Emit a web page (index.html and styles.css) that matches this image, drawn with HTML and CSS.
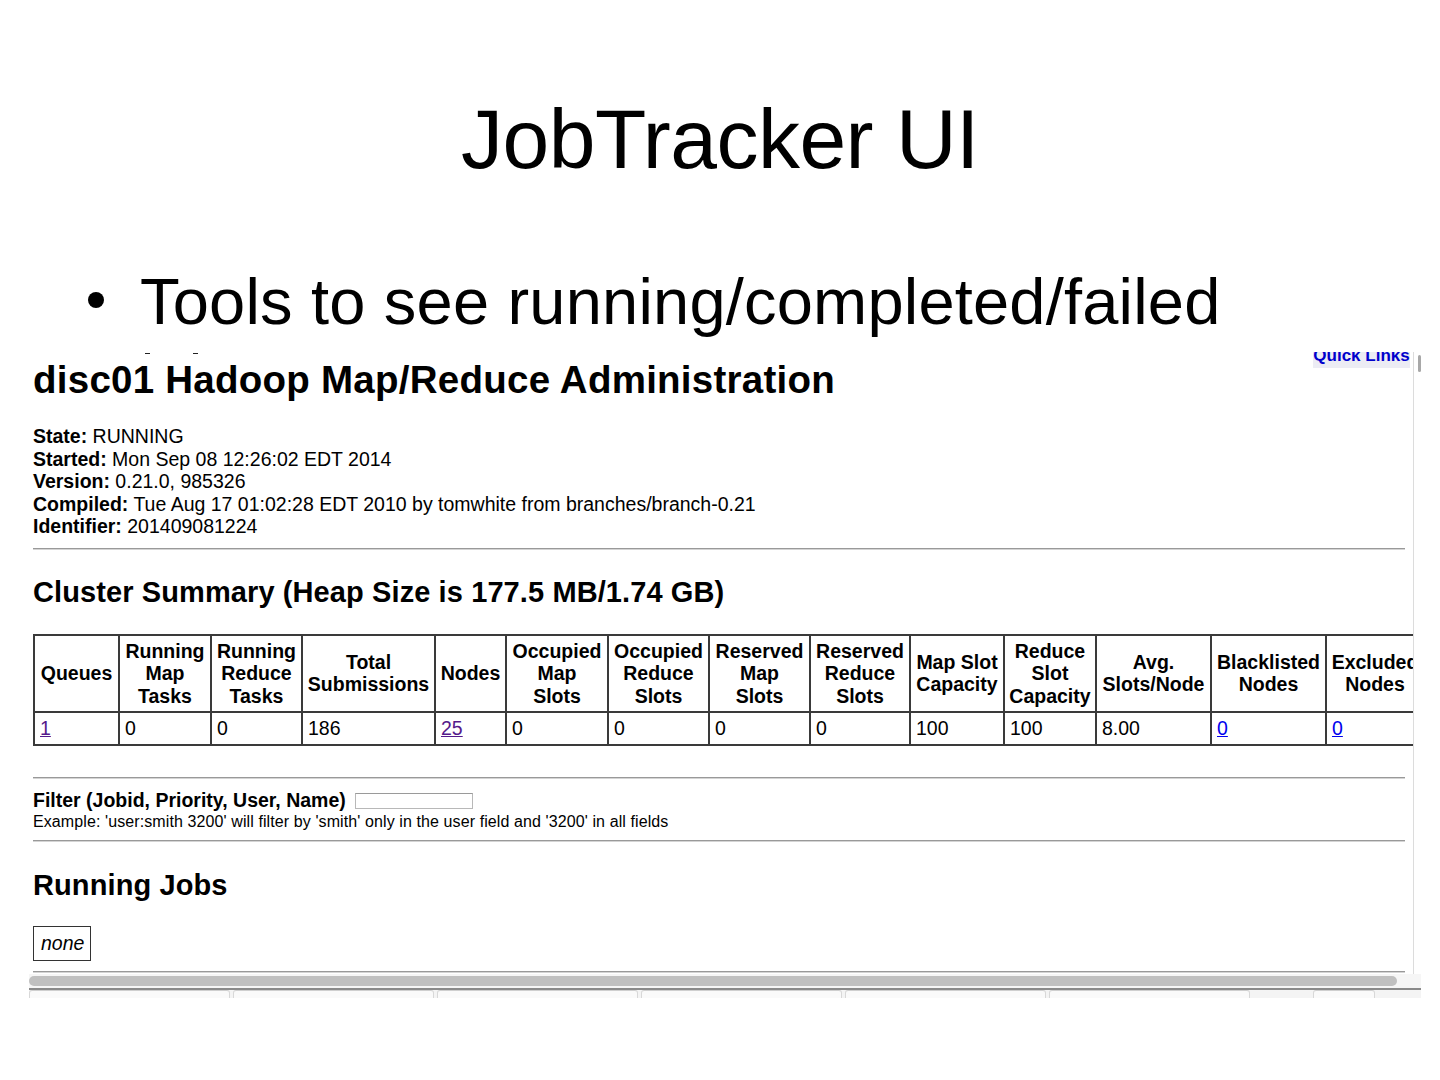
FILE: index.html
```html
<!DOCTYPE html>
<html>
<head>
<meta charset="utf-8">
<title>JobTracker UI</title>
<link rel="stylesheet" href="styles.css">
</head>
<body>
<div class="slide">
  <h1 class="slide-title">JobTracker UI</h1>
  <ul class="bullets">
    <li><span class="dot"></span><span class="btext">Tools to see running/completed/failed</span></li>
  </ul>
  <div class="shot">
    <div class="pane">
      <div class="content">
        <div class="quicklinks">Quick Links</div>
        <span class="clipmark m1"></span><span class="clipmark m2"></span>
        <h1 class="page-title">disc01 Hadoop Map/Reduce Administration</h1>
        <div class="info">
          <div><b>State:</b> RUNNING</div>
          <div><b>Started:</b> Mon Sep 08 12:26:02 EDT 2014</div>
          <div><b>Version:</b> 0.21.0, 985326</div>
          <div><b>Compiled:</b> Tue Aug 17 01:02:28 EDT 2010 by tomwhite from branches/branch-0.21</div>
          <div><b>Identifier:</b> 201409081224</div>
        </div>
        <div class="rule r1"></div>
        <h2 class="sec s1">Cluster Summary (Heap Size is 177.5 MB/1.74 GB)</h2>
        <table class="summary">
          <colgroup>
            <col class="c85"><col class="c92"><col class="c91"><col class="c133"><col class="c71"><col class="c102"><col class="c101"><col class="c101"><col class="c100"><col class="c94"><col class="c92"><col class="c115"><col class="c115"><col class="c98">
          </colgroup>
          <tr>
            <th>Queues</th>
            <th>Running<br>Map<br>Tasks</th>
            <th>Running<br>Reduce<br>Tasks</th>
            <th>Total<br>Submissions</th>
            <th>Nodes</th>
            <th>Occupied<br>Map<br>Slots</th>
            <th>Occupied<br>Reduce<br>Slots</th>
            <th>Reserved<br>Map<br>Slots</th>
            <th>Reserved<br>Reduce<br>Slots</th>
            <th>Map Slot<br>Capacity</th>
            <th>Reduce<br>Slot<br>Capacity</th>
            <th>Avg.<br>Slots/Node</th>
            <th>Blacklisted<br>Nodes</th>
            <th>Excluded<br>Nodes</th>
          </tr>
          <tr>
            <td><a class="visited" href="#">1</a></td>
            <td>0</td>
            <td>0</td>
            <td>186</td>
            <td><a class="visited" href="#">25</a></td>
            <td>0</td>
            <td>0</td>
            <td>0</td>
            <td>0</td>
            <td>100</td>
            <td>100</td>
            <td>8.00</td>
            <td><a class="link" href="#">0</a></td>
            <td><a class="link" href="#">0</a></td>
          </tr>
        </table>
        <div class="rule r2"></div>
        <div class="filter">
          <div class="filter-line"><b>Filter (Jobid, Priority, User, Name)</b><span class="field"></span></div>
          <div class="example">Example: 'user:smith 3200' will filter by 'smith' only in the user field and '3200' in all fields</div>
        </div>
        <div class="rule r3"></div>
        <h2 class="sec s2">Running Jobs</h2>
        <div class="nonebox"><i>none</i></div>
        <div class="rule r4"></div>
      </div>
      <div class="vbar"><div class="vthumb"></div></div>
    </div>
    <div class="hbar"><div class="hthumb"></div></div>
    <div class="tabs">
      <div class="tab"></div><div class="tab"></div><div class="tab"></div><div class="tab"></div><div class="tab"></div><div class="tab"></div><div class="tab small"></div>
    </div>
  </div>
</div>
</body>
</html>
```

FILE: styles.css
```css
html, body {
  margin: 0;
  padding: 0;
  background: #ffffff;
}
.slide {
  width: 1440px;
  height: 1080px;
  overflow: hidden;
  font-family: "Liberation Sans", Arial, sans-serif;
  color: #000;
}
.slide-title {
  margin: 0;
  padding-top: 89px;
  height: 100px;
  line-height: 100px;
  font-size: 84px;
  font-weight: normal;
  letter-spacing: -0.5px;
  text-align: center;
}
.bullets {
  list-style: none;
  margin: 73px 0 0 0;
  padding: 0 0 0 88px;
  height: 80px;
}
.bullets li {
  display: flex;
  align-items: center;
  height: 80px;
}
.dot {
  width: 16px;
  height: 16px;
  border-radius: 50%;
  background: #000;
  margin-right: 36px;
  margin-top: -4px;
  flex: none;
}
.btext {
  font-size: 65px;
  line-height: 80px;
  letter-spacing: 0.2px;
  white-space: nowrap;
}

/* embedded screenshot */
.shot {
  margin: 10px 0 0 29px;
  width: 1392px;
  height: 646px;
  display: flex;
  flex-direction: column;
  overflow: hidden;
}
.pane {
  display: flex;
  height: 622px;
}
.content {
  position: relative;
  width: 1380px;
  padding-left: 4px;
  overflow: hidden;
  font-size: 19.5px;
  line-height: 22.5px;
}
.quicklinks {
  position: absolute;
  top: -7px;
  right: 3px;
  width: 97px;
  height: 23px;
  background: #ececf4;
  color: #0000cc;
  font-weight: bold;
  font-size: 17px;
  line-height: 22px;
  text-align: center;
}
.clipmark {
  position: absolute;
  top: 1px;
  width: 5px;
  height: 1px;
  background: #222;
}
.m1 { left: 116px; }
.m2 { left: 164px; }
.page-title {
  margin: 7px 0 0 0;
  font-size: 38.5px;
  line-height: 42px;
  font-weight: bold;
  letter-spacing: 0.25px;
  white-space: nowrap;
}
.info {
  margin-top: 24px;
}
.rule {
  width: 1372px;
  height: 0;
  border-top: 1px solid #999;
  border-bottom: 1px solid #d4d4d4;
}
.r1 { margin-top: 10px; }
.r2 { margin-top: 31px; }
.r3 { margin-top: 9px; }
.r4 { margin-top: 10px; }
.sec {
  margin: 0;
  font-size: 29px;
  line-height: 32px;
  font-weight: bold;
  letter-spacing: 0.1px;
  white-space: nowrap;
}
.s1 { margin-top: 26px; }
.s2 { margin-top: 27px; }
.summary {
  margin-top: 26px;
  border-collapse: collapse;
  table-layout: fixed;
  width: 1390px;
}
.c85 { width: 85px; }
.c92 { width: 92px; }
.c91 { width: 91px; }
.c133 { width: 133px; }
.c71 { width: 71px; }
.c102 { width: 102px; }
.c101 { width: 101px; }
.c100 { width: 100px; }
.c94 { width: 94px; }
.c115 { width: 115px; }
.c98 { width: 98px; }
.summary th,
.summary td {
  border: 2px solid #3a3a3a;
  padding: 4px 5px;
  white-space: nowrap;
  overflow: hidden;
}
.summary th {
  text-align: center;
  vertical-align: middle;
  font-weight: bold;
  padding-left: 2px;
  padding-right: 2px;
}
.summary td {
  text-align: left;
  padding-left: 5px;
}
a.visited { color: #551a8b; }
a.link { color: #0000ee; }
.filter {
  margin-top: 10px;
}
.filter-line {
  display: flex;
  align-items: center;
  height: 22.5px;
}
.field {
  display: inline-block;
  width: 116px;
  height: 14px;
  margin-left: 9px;
  margin-top: 2px;
  border: 1px solid #b8b8b8;
  border-top-color: #9a9a9a;
  background: #fff;
}
.example {
  margin-top: 2px;
  font-size: 16px;
  line-height: 18px;
  letter-spacing: 0.1px;
  white-space: nowrap;
}
.nonebox {
  margin-top: 25px;
  display: inline-block;
  border: 1px solid #333;
  padding: 5px 6px 5px 7px;
}
.vbar {
  width: 7px;
  border-left: 1px solid #dcdcdc;
  position: relative;
  background: #fff;
}
.vthumb {
  position: absolute;
  top: 3px;
  right: 0;
  width: 3px;
  height: 17px;
  background: #a8a8a8;
  border-radius: 2px;
}
.hbar {
  height: 14px;
  background: #f6f6f6;
  padding: 2px 24px 0 0;
  box-sizing: border-box;
}
.hthumb {
  height: 10px;
  background: #c0c0c0;
  border-radius: 5px;
}
.hbar + .tabs {
  border-top: 2px solid #8a8a8a;
}
.tabs {
  height: 8px;
  display: flex;
  gap: 3px;
  background: #f4f4f4;
}
.tab {
  width: 199px;
  border-top: 1px solid #cfcfcf;
  border-left: 1px solid #d8d8d8;
  border-right: 1px solid #d8d8d8;
  background: #fafafa;
  border-radius: 3px 3px 0 0;
}
.tab.small {
  width: 60px;
  margin-left: 60px;
}
```
